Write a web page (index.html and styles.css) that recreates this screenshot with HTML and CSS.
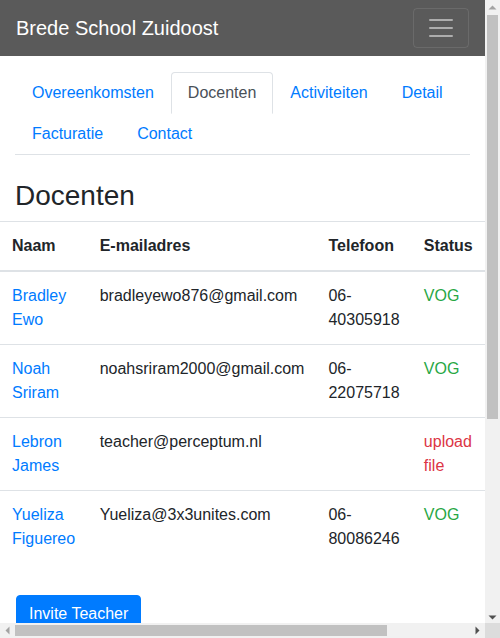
FILE: index.html
```html
<!DOCTYPE html>
<html lang="nl">
<head>
<meta charset="utf-8">
<title>Brede School Zuidoost</title>
<link rel="stylesheet" href="styles.css">
</head>
<body>
<div class="frame">
  <main class="page">
    <nav class="navbar">
      <a class="brand" href="#">Brede School Zuidoost</a>
      <button class="toggler" type="button" aria-label="Toggle navigation">
        <svg class="toggler-icon" width="30" height="30" viewBox="0 0 30 30">
          <path d="M4 7h22M4 15h22M4 23h22" stroke="rgba(255,255,255,0.5)" stroke-width="2" stroke-linecap="round"/>
        </svg>
      </button>
    </nav>

    <div class="container">
      <ul class="tabs">
        <li><a class="tab" href="#">Overeenkomsten</a></li>
        <li><a class="tab active" href="#">Docenten</a></li>
        <li><a class="tab" href="#">Activiteiten</a></li>
        <li><a class="tab" href="#">Detail</a></li>
        <li><a class="tab" href="#">Facturatie</a></li>
        <li><a class="tab" href="#">Contact</a></li>
      </ul>
      <h3 class="title">Docenten</h3>
    </div>

    <table class="table">
      <thead>
        <tr><th>Naam</th><th>E-mailadres</th><th>Telefoon</th><th>Status</th></tr>
      </thead>
      <tbody>
        <tr><td><a href="#">Bradley Ewo</a></td><td>bradleyewo876@gmail.com</td><td>06-40305918</td><td class="ok">VOG</td></tr>
        <tr><td><a href="#">Noah Sriram</a></td><td>noahsriram2000@gmail.com</td><td>06-22075718</td><td class="ok">VOG</td></tr>
        <tr><td><a href="#">Lebron James</a></td><td>teacher@perceptum.nl</td><td></td><td class="bad">upload file</td></tr>
        <tr><td><a href="#">Yueliza Figuereo</a></td><td>Yueliza@3x3unites.com</td><td>06-80086246</td><td class="ok">VOG</td></tr>
      </tbody>
    </table>

    <div class="container actions">
      <button class="btn" type="button">Invite Teacher</button>
    </div>
  </main>

  <div class="vbar" aria-hidden="true">
    <svg class="arrow" width="15" height="15" viewBox="0 0 15 15"><polygon points="3.5,9.5 11.5,9.5 7.5,5.5" fill="#a3a3a3"/></svg>
    <div class="vtrack"><div class="vthumb"></div></div>
    <svg class="arrow" width="15" height="15" viewBox="0 0 15 15"><polygon points="3.5,11.5 11.5,11.5 7.5,15.5" transform="translate(0,-4)" fill="#505050"/></svg>
  </div>

  <div class="hbar" aria-hidden="true">
    <svg class="arrow" width="15" height="15" viewBox="0 0 15 15"><polygon points="9.5,3.5 9.5,11.5 5.5,7.5" fill="#a3a3a3"/></svg>
    <div class="htrack"><div class="hthumb"></div></div>
    <svg class="arrow" width="15" height="15" viewBox="0 0 15 15"><polygon points="5.5,3.5 5.5,11.5 9.5,7.5" fill="#505050"/></svg>
  </div>

  <div class="corner"></div>
</div>
</body>
</html>
```

FILE: styles.css
```css
* { box-sizing: border-box; }

html, body {
  margin: 0;
  padding: 0;
  overflow: hidden;
}

body {
  font-family: "Liberation Sans", Arial, sans-serif;
  font-size: 16px;
  line-height: 1.5;
  color: #212529;
  background: #fff;
}

a { color: #007bff; text-decoration: none; }

.frame {
  display: grid;
  grid-template-columns: 485px 15px;
  grid-template-rows: 623px 15px;
  width: 500px;
  height: 638px;
}

.page {
  overflow: hidden;
  width: 485px;
  height: 623px;
}

/* scrollbars */
.vbar {
  display: flex;
  flex-direction: column;
  background: #f1f1f1;
}

.arrow { display: block; flex: none; }

.vtrack {
  flex: 1;
  padding: 0 2px;
}

.vthumb {
  height: 404px;
  background: #c1c1c1;
}

.hbar {
  display: flex;
  background: #f1f1f1;
}

.htrack {
  flex: 1;
  padding: 2px 0;
}

.hthumb {
  width: 372px;
  height: 100%;
  background: #c1c1c1;
}

.corner { background: #dcdcdc; }

/* navbar */
.navbar {
  display: flex;
  align-items: center;
  justify-content: space-between;
  padding: 8px 16px;
  background: #5a5a5a;
}

.brand {
  color: #fff;
  font-size: 20px;
  line-height: 30px;
  padding: 5px 0;
  white-space: nowrap;
}

.toggler {
  display: flex;
  align-items: center;
  justify-content: center;
  width: 56px;
  height: 40px;
  padding: 4px 12px;
  background: transparent;
  border: 1px solid rgba(255,255,255,0.1);
  border-radius: 4px;
}

.toggler-icon { display: block; }

.container {
  padding: 0 15px;
}

.tabs {
  display: flex;
  flex-wrap: wrap;
  list-style: none;
  margin: 16px 0 0;
  padding: 0;
  border-bottom: 1px solid #dee2e6;
}

.tabs li { margin-bottom: -1px; }

.tab {
  display: block;
  padding: 8px 16px;
  border: 1px solid transparent;
  border-radius: 4px 4px 0 0;
  line-height: 24px;
}

.tab.active {
  color: #495057;
  background: #fff;
  border-color: #dee2e6 #dee2e6 #fff;
}

.title {
  margin: 24px 0 8px;
  font-size: 28px;
  font-weight: 500;
  line-height: 1.2;
}

.table {
  width: 100%;
  border-collapse: collapse;
  margin-bottom: 16px;
}

.table th,
.table td {
  padding: 12px;
  vertical-align: top;
  text-align: left;
  border-top: 1px solid #dee2e6;
}

.table thead th {
  vertical-align: bottom;
  border-bottom: 2px solid #dee2e6;
  font-weight: bold;
}

.ok { color: #28a745; }
.bad { color: #dc3545; }

.actions { padding-top: 16px; }

.btn {
  font-family: inherit;
  font-size: 16px;
  line-height: 24px;
  padding: 6px 12px;
  color: #fff;
  background: #007bff;
  border: 1px solid #007bff;
  border-radius: 4px;
  margin-left: 1px;
}
```
